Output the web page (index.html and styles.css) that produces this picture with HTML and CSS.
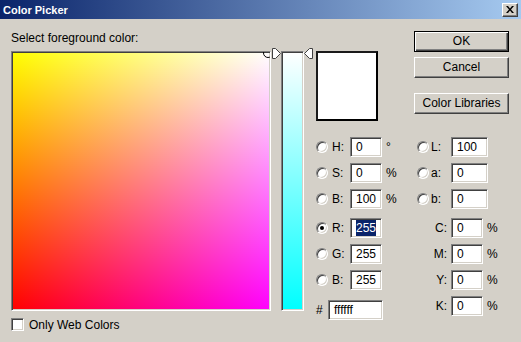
FILE: index.html
```html
<!DOCTYPE html>
<html lang="en">
<head>
  <meta charset="UTF-8" />
  <title>Color Picker</title>
  <link rel="stylesheet" href="styles.css">
</head>
<body>
  <div class="dialog">
    <!-- Title bar -->
    <div class="titlebar">
      <span class="title">Color Picker</span>
      <div class="close-btn">
        <svg width="8" height="7" viewBox="0 0 8 7">
          <path d="M0 0h2l2 2.5L6 0h2L5 3.5 8 7H6L4 4.5 2 7H0l3-3.5z" fill="#000"/>
        </svg>
      </div>
    </div>

    <div class="content">
      <!-- Colour field -->
      <div class="picker-col">
        <div class="prompt">Select foreground color:</div>
        <div class="field"><span class="field-marker"></span></div>
        <div class="web-only"><span class="checkbox"></span>Only Web Colors</div>
      </div>

      <!-- Slider -->
      <div class="slider">
        <svg class="arrow arrow-left" width="9" height="11" viewBox="0 0 9 11">
          <path d="M0.5 0.5h3l5 5-5 5h-3z" fill="#fff" stroke="#404040"/>
        </svg>
        <div class="strip"></div>
        <svg class="arrow arrow-right" width="9" height="11" viewBox="0 0 9 11">
          <path d="M8.5 0.5h-3l-5 5 5 5h3z" fill="#fff" stroke="#404040"/>
        </svg>
      </div>

      <!-- Controls -->
      <div class="controls">
        <div class="controls-top">
          <div class="swatch"></div>
          <div class="buttons">
            <div class="btn btn-default">OK</div>
            <div class="btn btn-cancel">Cancel</div>
            <div class="btn btn-libs">Color Libraries</div>
          </div>
        </div>

        <div class="values">
          <div class="value-group group-left">
            <div class="row"><span class="radio"></span><span class="lbl">H:</span><div class="textbox">0</div><span class="unit">°</span></div>
            <div class="row"><span class="radio"></span><span class="lbl">S:</span><div class="textbox">0</div><span class="unit">%</span></div>
            <div class="row"><span class="radio"></span><span class="lbl">B:</span><div class="textbox">100</div><span class="unit">%</span></div>
            <div class="row row-break"><span class="radio checked"></span><span class="lbl">R:</span><div class="textbox"><span class="selected">255</span></div></div>
            <div class="row"><span class="radio"></span><span class="lbl">G:</span><div class="textbox">255</div></div>
            <div class="row"><span class="radio"></span><span class="lbl">B:</span><div class="textbox">255</div></div>
            <div class="row row-hex"><span class="hash">#</span><div class="textbox hex">ffffff</div></div>
          </div>

          <div class="value-group group-right">
            <div class="row"><span class="radio"></span><span class="lbl">L:</span><div class="textbox wide">100</div></div>
            <div class="row"><span class="radio"></span><span class="lbl">a:</span><div class="textbox wide">0</div></div>
            <div class="row"><span class="radio"></span><span class="lbl">b:</span><div class="textbox wide">0</div></div>
            <div class="row row-break"><span class="lbl-right">C:</span><div class="textbox">0</div><span class="unit">%</span></div>
            <div class="row"><span class="lbl-right">M:</span><div class="textbox">0</div><span class="unit">%</span></div>
            <div class="row"><span class="lbl-right">Y:</span><div class="textbox">0</div><span class="unit">%</span></div>
            <div class="row"><span class="lbl-right">K:</span><div class="textbox">0</div><span class="unit">%</span></div>
          </div>
        </div>
      </div>
    </div>
  </div>
</body>
</html>
```

FILE: styles.css
```css
* {
  margin: 0;
  padding: 0;
  box-sizing: border-box;
}
body {
  font-family: 'Liberation Sans', Arial, sans-serif;
  font-size: 12px;
  color: #000;
  background: #d4d0c8;
  width: 521px;
  height: 342px;
  overflow: hidden;
}
.dialog {
  width: 521px;
  height: 342px;
  background: #d4d0c8;
}

/* Title bar */
.titlebar {
  height: 19px;
  display: flex;
  align-items: center;
  justify-content: space-between;
  padding: 0 3px 0 3px;
  background: linear-gradient(to right, #0a246a, #a6caf0);
}
.title {
  color: #fff;
  font-weight: bold;
  font-size: 11px;
}
.close-btn {
  width: 16px;
  height: 14px;
  display: flex;
  align-items: center;
  justify-content: center;
  background: #d4d0c8;
  border: 1px solid;
  border-color: #fff #404040 #404040 #fff;
  box-shadow: inset -1px -1px #808080;
}

.content {
  display: flex;
  padding: 12px 0 0 11px;
}

/* Colour field */
.picker-col {
  width: 260px;
}
.prompt {
  height: 14px;
  line-height: 14px;
  margin-bottom: 6px;
}
.field {
  position: relative;
  width: 260px;
  height: 260px;
  overflow: hidden;
  border: 1px solid;
  border-color: #808080 #fff #fff #808080;
  box-shadow: inset 1px 1px #404040, inset -1px -1px #d4d0c8;
  background-image: linear-gradient(to right, #000, #00f), linear-gradient(to bottom, #ff0, #f00);
  background-blend-mode: screen;
}
.field-marker {
  position: absolute;
  top: -4px;
  right: -3px;
  width: 10px;
  height: 10px;
  border: 1px solid #000;
  border-radius: 50%;
}
.web-only {
  display: flex;
  align-items: center;
  gap: 5px;
  margin-top: 7px;
  height: 13px;
}
.checkbox {
  width: 13px;
  height: 13px;
  background: #fff;
  border: 1px solid;
  border-color: #808080 #fff #fff #808080;
  box-shadow: inset 1px 1px #404040, inset -1px -1px #d4d0c8;
}

/* Slider */
.slider {
  position: relative;
  margin: 20px 0 0 10px;
  height: 260px;
}
.strip {
  width: 23px;
  height: 260px;
  border: 1px solid;
  border-color: #808080 #fff #fff #808080;
  box-shadow: inset 1px 1px #404040, inset -1px -1px #d4d0c8;
  background: linear-gradient(to bottom, #fff, #0ff);
}
.arrow {
  position: absolute;
  top: -3px;
}
.arrow-left {
  left: -9px;
}
.arrow-right {
  right: -9px;
}

/* Controls */
.controls {
  margin-left: 12px;
  width: 195px;
}
.controls-top {
  display: flex;
  align-items: flex-start;
  height: 90px;
}
.swatch {
  margin-top: 20px;
  width: 62px;
  height: 70px;
  background: #fff;
  border: 2px solid #1a1a1a;
  border-right-color: #000;
  border-bottom-color: #000;
}
.buttons {
  margin-left: 36px;
  width: 95px;
  display: flex;
  flex-direction: column;
}
.btn {
  height: 21px;
  line-height: 19px;
  text-align: center;
  background: #d4d0c8;
  border: 1px solid;
  border-color: #fff #404040 #404040 #fff;
  box-shadow: inset -1px -1px #808080;
}
.btn-default {
  border-color: #000;
  box-shadow: inset 1px 1px #fff, inset -1px -1px #404040, inset -2px -2px #808080;
}
.btn-cancel {
  margin-top: 5px;
}
.btn-libs {
  margin-top: 15px;
}

.values {
  display: flex;
  margin-top: 16px;
}
.value-group {
  display: flex;
  flex-direction: column;
  gap: 6px;
}
.group-left {
  width: 101px;
}
.row {
  display: flex;
  align-items: center;
  height: 20px;
}
.row-break {
  margin-top: 3px;
}
.group-right .row-break {
  margin-top: 3px;
}
.row-hex {
  margin-top: 4px;
}
.radio {
  position: relative;
  width: 12px;
  height: 12px;
  border-radius: 50%;
  background: #fff;
  border: 1px solid;
  border-color: #808080 #fff #fff #808080;
  box-shadow: inset 1px 1px #404040, inset -1px -1px #d4d0c8;
}
.radio.checked::after {
  content: "";
  position: absolute;
  top: 3px;
  left: 3px;
  width: 4px;
  height: 4px;
  border-radius: 50%;
  background: #000;
}
.lbl {
  width: 22px;
  padding-left: 4px;
}
.group-right .lbl {
  padding-left: 2px;
}
.lbl-right {
  width: 34px;
  text-align: right;
  padding-right: 4px;
}
.hash {
  width: 12px;
}
.textbox {
  width: 32px;
  height: 20px;
  line-height: 18px;
  padding-left: 5px;
  background: #fff;
  border: 1px solid;
  border-color: #808080 #fff #fff #808080;
  box-shadow: inset 1px 1px #404040, inset -1px -1px #d4d0c8;
  white-space: nowrap;
}
.textbox.wide {
  width: 37px;
}
.textbox.hex {
  width: 55px;
}
.selected {
  background: #0a246a;
  color: #fff;
  padding: 1px 0;
}
.unit {
  margin-left: 4px;
}
```
